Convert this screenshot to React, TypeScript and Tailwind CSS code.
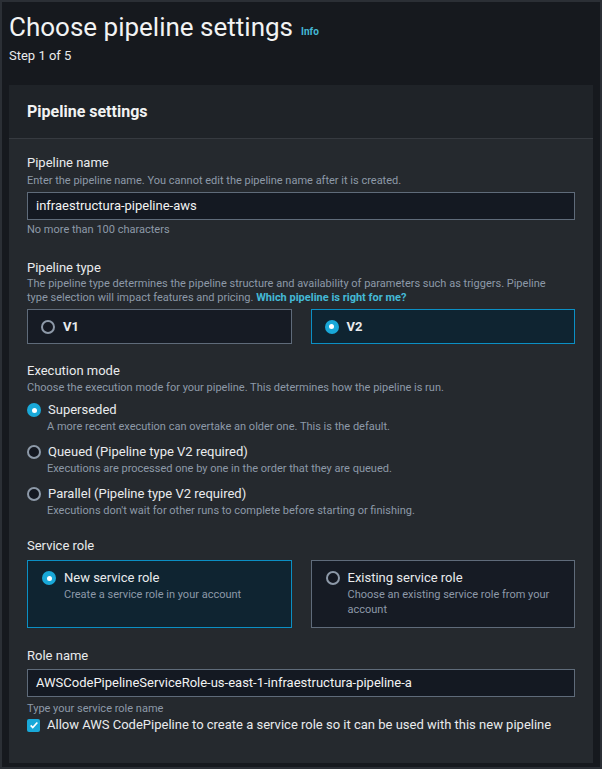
import React from 'react';

const font = { fontFamily: 'Roboto, "Noto Sans", Arial, sans-serif' };

function Radio({ checked }: { checked?: boolean }) {
  if (checked) {
    return (
      <span className="flex h-[14px] w-[14px] shrink-0 items-center justify-center rounded-full bg-[#19a8d8]">
        <span className="h-[5px] w-[5px] rounded-full bg-white" />
      </span>
    );
  }
  return <span className="block h-[14px] w-[14px] shrink-0 rounded-full border-2 border-[#8d99a8] bg-[#141821]" />;
}

function Option({ checked, title, desc }: { checked?: boolean; title: string; desc: string }) {
  return (
    <div className="flex flex-col">
      <div className="flex h-[18px] items-center gap-[7px]">
        <Radio checked={checked} />
        <span className="text-[13px] text-[#e9ebed]">{title}</span>
      </div>
      <p className="ml-[20px] mt-[1px] text-[11px] leading-[14px] text-[#8d99a8]">{desc}</p>
    </div>
  );
}

export default function App() {
  return (
    <div className="min-h-screen border-2 border-[#2b2f35] bg-[#16191e] px-[7px]" style={font}>
      {/* Header */}
      <div className="flex items-end gap-[8px] pt-[8px]">
        <h1 className="text-[26px] leading-[34px] text-[#f2f3f3]">Choose pipeline settings</h1>
        <span className="mb-[5px] text-[10px] font-bold text-[#44b9d6]">Info</span>
      </div>
      <p className="mt-[3px] text-[13px] leading-[18px] text-[#e9ebed]">Step 1 of 5</p>

      {/* Card */}
      <div className="mt-[20px] bg-[#25292e]">
        <div className="flex h-[54px] items-center border-b border-[#363a40] bg-[#1f2328] px-[18px]">
          <h2 className="text-[16px] font-bold text-[#f2f3f3]">Pipeline settings</h2>
        </div>

        <div className="flex flex-col px-[18px] pt-[15px] pb-[29px]">
          <label className="text-[13px] leading-[18px] text-[#e9ebed]">Pipeline name</label>
          <p className="mt-[2px] text-[11px] leading-[14px] text-[#8d99a8]">
            Enter the pipeline name. You cannot edit the pipeline name after it is created.
          </p>
          <div className="mt-[4px] flex h-[28px] items-center border border-[#5f6b7a] bg-[#141922] px-[8px] text-[13px] text-[#f2f3f3]">
            infraestructura-pipeline-aws
          </div>
          <p className="mt-[3px] text-[11px] leading-[14px] text-[#8d99a8]">No more than 100 characters</p>

          <label className="mt-[22px] text-[13px] leading-[18px] text-[#e9ebed]">Pipeline type</label>
          <p className="text-[11px] leading-[14px] text-[#8d99a8]">
            The pipeline type determines the pipeline structure and availability of parameters such as triggers. Pipeline
            <br />
            type selection will impact features and pricing.{' '}
            <span className="font-bold text-[#44b9d6]">Which pipeline is right for me?</span>
          </p>
          <div className="mt-[4px] grid grid-cols-2 gap-[19px]">
            <div className="flex h-[35px] items-center gap-[8px] border border-[#5f6b7a] bg-[#161b24] px-[13px]">
              <Radio />
              <span className="text-[13px] font-bold text-[#e9ebed]">V1</span>
            </div>
            <div className="flex h-[35px] items-center gap-[8px] border border-[#0b8fc4] bg-[#0f2431] px-[13px]">
              <Radio checked />
              <span className="text-[13px] font-bold text-[#e9ebed]">V2</span>
            </div>
          </div>

          <label className="mt-[18px] text-[13px] leading-[18px] text-[#e9ebed]">Execution mode</label>
          <p className="mt-[1px] text-[11px] leading-[14px] text-[#8d99a8]">
            Choose the execution mode for your pipeline. This determines how the pipeline is run.
          </p>
          <div className="mt-[6px] flex flex-col gap-[9px]">
            <Option checked title="Superseded" desc="A more recent execution can overtake an older one. This is the default." />
            <Option title="Queued (Pipeline type V2 required)" desc="Executions are processed one by one in the order that they are queued." />
            <Option title="Parallel (Pipeline type V2 required)" desc="Executions don't wait for other runs to complete before starting or finishing." />
          </div>

          <label className="mt-[19px] text-[13px] leading-[18px] text-[#e9ebed]">Service role</label>
          <div className="mt-[5px] grid grid-cols-2 gap-[19px]">
            <div className="flex h-[68px] items-start gap-[8px] border border-[#0b8fc4] bg-[#0f2431] px-[14px] pt-[8px]">
              <span className="mt-[2px] flex shrink-0">
                <Radio checked />
              </span>
              <div className="flex flex-col">
                <span className="text-[13px] leading-[18px] text-[#e9ebed]">New service role</span>
                <span className="text-[11px] leading-[15px] text-[#8d99a8]">Create a service role in your account</span>
              </div>
            </div>
            <div className="flex h-[68px] items-start gap-[8px] border border-[#5f6b7a] bg-[#161b24] px-[14px] pt-[8px]">
              <span className="mt-[2px] flex shrink-0">
                <Radio />
              </span>
              <div className="flex flex-col">
                <span className="text-[13px] leading-[18px] text-[#e9ebed]">Existing service role</span>
                <span className="text-[11px] leading-[15px] text-[#8d99a8]">
                  Choose an existing service role from your
                  <br />
                  account
                </span>
              </div>
            </div>
          </div>

          <label className="mt-[19px] text-[13px] leading-[18px] text-[#e9ebed]">Role name</label>
          <div className="mt-[4px] flex h-[28px] items-center border border-[#5f6b7a] bg-[#141922] px-[8px] text-[13px] text-[#f2f3f3]">
            AWSCodePipelineServiceRole-us-east-1-infraestructura-pipeline-a
          </div>
          <p className="mt-[5px] text-[11px] leading-[14px] text-[#8d99a8]">Type your service role name</p>
          <div className="flex h-[18px] items-center gap-[7px]">
            <span className="flex h-[13px] w-[13px] shrink-0 items-center justify-center rounded-[2px] bg-[#19a8d8]">
              <svg viewBox="0 0 12 12" className="h-[10px] w-[10px]" fill="none" stroke="white" strokeWidth="2">
                <path d="M2 6.5l2.5 2.5L10 3" />
              </svg>
            </span>
            <span className="text-[13px] text-[#e9ebed]">
              Allow AWS CodePipeline to create a service role so it can be used with this new pipeline
            </span>
          </div>
        </div>
      </div>
    </div>
  );
}
